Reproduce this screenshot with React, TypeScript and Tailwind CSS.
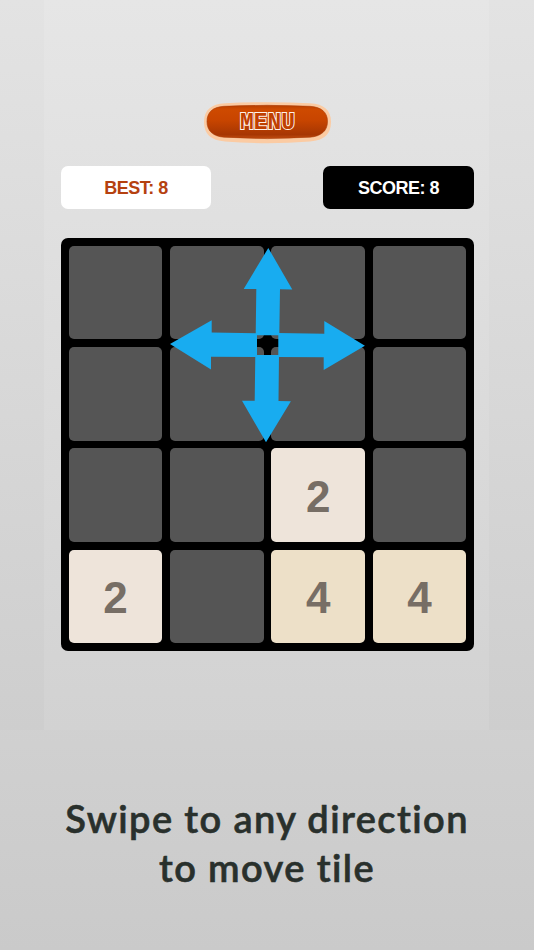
const rows: (number | null)[][] = [
  [null, null, null, null],
  [null, null, null, null],
  [null, null, 2, null],
  [2, null, 4, 4],
];

function Tile({ value }: { value: number | null }) {
  const tone = value === 2 ? "bg-[#eee4da]" : value === 4 ? "bg-[#ede0c8]" : "bg-[#555555]";
  return (
    <div className={`flex items-center justify-center rounded-[5px] pt-[3px] text-[44px] leading-none font-bold text-[#776e65] ${tone}`}>
      {value}
    </div>
  );
}

function MenuButton() {
  return (
    <button className="block h-[42px] w-[129px]" aria-label="Menu">
      <svg width="129" height="42" viewBox="203 102 129 42">
        <defs>
          <linearGradient id="orange" x1="0" y1="0" x2="0" y2="1">
            <stop offset="0" stopColor="#b83f00" />
            <stop offset="0.12" stopColor="#ce4a00" />
            <stop offset="0.45" stopColor="#c84500" />
            <stop offset="0.88" stopColor="#a63603" />
            <stop offset="1" stopColor="#c04c10" />
          </linearGradient>
        </defs>
        <path
          d="M225 103.200Q267.500 101.200 310 103.200C324 104 331 110 331 122C331 134 324 140.500 310 141.500Q267.500 145 225 141.500C211 140.500 204 134 204 122C204 110 211 104 225 103.200Z"
          fill="#fbcba3"
        />
        <path
          d="M224 106.300Q267.500 104.300 310 106.300C321 107 327.500 112 327.500 121.500C327.500 131 321 136.300 310 137.200Q267.500 140 224 137.200C213 136.300 207 131 207 121.500C207 112 213 107 224 106.300Z"
          fill="url(#orange)"
          stroke="#a93b06"
          strokeWidth="0.6"
        />
        <text
          x="267.500"
          y="129.300"
          textAnchor="middle"
          textLength="55"
          lengthAdjust="spacingAndGlyphs"
          fill="#c04000"
          stroke="#fff1e8"
          strokeWidth="2"
          paintOrder="stroke"
          className="font-['Liberation_Mono',monospace] text-[23px] font-bold"
        >
          MENU
        </text>
      </svg>
    </button>
  );
}

function SwipeArrows() {
  return (
    <svg className="absolute inset-0 h-full w-full" viewBox="61 238 413 413" fill="#18acf0">
      <polygon points="268.300,248 292.300,289.500 280,289.300 279.300,335.300 255.700,335.300 256.300,289 243.700,289" />
      <polygon points="170,344 211.700,320.300 211.700,332.500 257,333.300 257,357 211,356.700 211,369.500" />
      <polygon points="364.900,345.700 324.300,321 324.300,333.700 278.300,333 278.300,357 323.700,357.300 323.700,370" />
      <polygon points="266,442.300 290.900,401.300 278.500,401 279,355 255.300,355 254.700,400.700 242,400.700" />
    </svg>
  );
}

export default function App() {
  return (
    <div className="h-[950px] w-[534px] overflow-hidden bg-linear-to-b from-[#e6e6e6] to-[#cacaca] font-['Liberation_Sans',Arial,sans-serif]">
      <div className="flex h-[730px]">
        <div className="w-[44px] bg-linear-to-b from-[#e3e3e3] to-[#cecece]" />
        <main className="flex w-[445px] flex-col items-center bg-linear-to-b from-[#e6e6e6] to-[#d2d2d2] pt-[102px] pl-[2px]">
          <MenuButton />
          <div className="mt-[22px] flex w-[413px] justify-between text-[18px] font-bold">
            <div className="flex h-[43px] w-[150px] items-center justify-center rounded-[7px] bg-white pt-[2px] text-[#b5410f]">
              <span className="tracking-[-0.500px]">BEST: 8</span>
            </div>
            <div className="flex h-[43px] w-[151px] items-center justify-center rounded-[7px] bg-black pt-[2px] text-white">
              <span className="tracking-[-0.500px]">SCORE: 8</span>
            </div>
          </div>
          <section className="relative mt-[29px] grid h-[413px] w-[413px] grid-cols-4 grid-rows-4 gap-[7.700px] rounded-[7px] bg-black p-[7.700px]">
            {rows.flat().map((value, i) => (
              <Tile key={i} value={value} />
            ))}
            <SwipeArrows />
          </section>
        </main>
        <div className="w-[45px] bg-linear-to-b from-[#e3e3e3] to-[#cecece]" />
      </div>
      <p className="pt-[64px] text-center font-['Lato',sans-serif] text-[38px] leading-[48.500px] font-semibold tracking-[1.400px] whitespace-nowrap text-[#29302c] [-webkit-text-stroke:0.600px_#29302c]">
        Swipe to any direction
        <br />
        to move tile
      </p>
    </div>
  );
}
